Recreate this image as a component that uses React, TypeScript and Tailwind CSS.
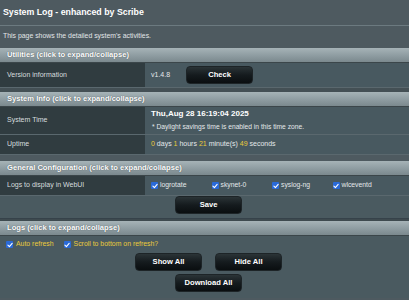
import React from "react";

const Check = () => (
  <span className="inline-flex items-center justify-center w-[7px] h-[7px] rounded-[1px] bg-[#2a6ad8] shrink-0">
    <svg width="6" height="6" viewBox="0 0 10 10">
      <path d="M1.5 5.2 L4 7.6 L8.6 2.2" fill="none" stroke="white" strokeWidth="1.8" strokeLinecap="round" strokeLinejoin="round" />
    </svg>
  </span>
);

const Btn = ({ children, className = "" }: { children: React.ReactNode; className?: string }) => (
  <div
    className={`w-[67px] h-[18px] rounded-[4px] bg-gradient-to-b from-[#2b3437] via-[#151b1e] to-[#0a0e10] border border-[#1d2427] flex items-center justify-center text-white font-bold text-[7.6px] ${className}`}
  >
    {children}
  </div>
);

const Header = ({ children }: { children: React.ReactNode }) => (
  <div className="h-[15px] bg-gradient-to-b from-[#a6b3b7] via-[#909ea3] to-[#7b898e] border-b border-[#3b464a] flex items-center pl-[7px] text-white font-bold text-[7.6px] [text-shadow:0_0_1px_#3a4448]">
    {children}
  </div>
);

const Row = ({ label, h, children }: { label: string; h: string; children: React.ReactNode }) => (
  <div className={`flex ${h} border-b border-[#5a686e]`}>
    <div className="w-[145px] bg-[#303c40] flex items-center pl-[7px] text-[#d6dcdf] text-[7px]">{label}</div>
    <div className="flex-1 bg-[#485960] flex items-center pl-[6px] text-[#e4e8ea] text-[7px]">{children}</div>
  </div>
);

const Y = ({ children }: { children: React.ReactNode }) => <span className="text-[#eacb3c]">{children}</span>;

export default function App() {
  return (
    <div className="w-[409px] h-[300px] overflow-hidden bg-[#4e5a60] font-['Liberation_Sans',Arial,sans-serif] text-[#e6eaec]">
      <div className="h-[25px] flex items-center pl-[3px] pt-[1px] text-[8.8px] font-bold text-white">
        System Log - enhanced by Scribe
      </div>
      <div className="h-px bg-[#6c7a80]" />
      <div className="h-[22px] flex items-center pl-[3px] pb-[1px] text-[6.9px] text-[#e2e6e8]">
        This page shows the detailed system's activities.
      </div>

      {/* Utilities */}
      <Header>Utilities (click to expand/collapse)</Header>
      <Row label="Version information" h="h-[25px]">
        <span>v1.4.8</span>
        <Btn className="ml-[16px]">Check</Btn>
      </Row>
      <div className="h-[4px] bg-[#445055]" />

      {/* System Info */}
      <Header>System Info (click to expand/collapse)</Header>
      <Row label="System Time" h="h-[28px]">
        <div className="flex flex-col gap-[2px]">
          <span className="font-bold text-[8px] text-white">Thu,Aug 28 16:19:04 2025</span>
          <span className="text-[6.7px] pl-[1px]">* Daylight savings time is enabled in this time zone.</span>
        </div>
      </Row>
      <Row label="Uptime" h="h-[20px]">
        <span>
          <Y>0</Y> days <Y>1</Y> hours <Y>21</Y> minute(s) <Y>49</Y> seconds
        </span>
      </Row>
      <div className="h-[6px]" />

      {/* General Configuration */}
      <Header>General Configuration (click to expand/collapse)</Header>
      <Row label="Logs to display in WebUI" h="h-[20px]">
        <div className="flex items-center">
          {["logrotate", "skynet-0", "syslog-ng", "wlceventd"].map((n) => (
            <div key={n} className="w-[60.5px] flex items-center gap-[2px] text-[6.8px]">
              <Check />
              <span>{n}</span>
            </div>
          ))}
        </div>
      </Row>
      <div className="h-[23px] bg-[#4a5a60] border-b border-[#36424a] flex justify-center pl-[8px]">
        <Btn>Save</Btn>
      </div>
      <div className="h-[2px] bg-[#3e4a4f]" />

      {/* Logs */}
      <Header>Logs (click to expand/collapse)</Header>
      <div className="bg-[#4a5a60] h-[62px] flex flex-col">
        <div className="h-[17px] flex items-center pl-[6px] gap-[2px] text-[6.9px] text-[#eacb3c]">
          <Check />
          <span className="mr-[8px] ml-[1px]">Auto refresh</span>
          <Check />
          <span className="ml-[1px]">Scroll to bottom on refresh?</span>
        </div>
        <div className="flex justify-center pl-[8px] gap-[13px]">
          <Btn>Show All</Btn>
          <Btn>Hide All</Btn>
        </div>
        <div className="flex justify-center pl-[8px] mt-[3px]">
          <Btn>Download All</Btn>
        </div>
      </div>
    </div>
  );
}
